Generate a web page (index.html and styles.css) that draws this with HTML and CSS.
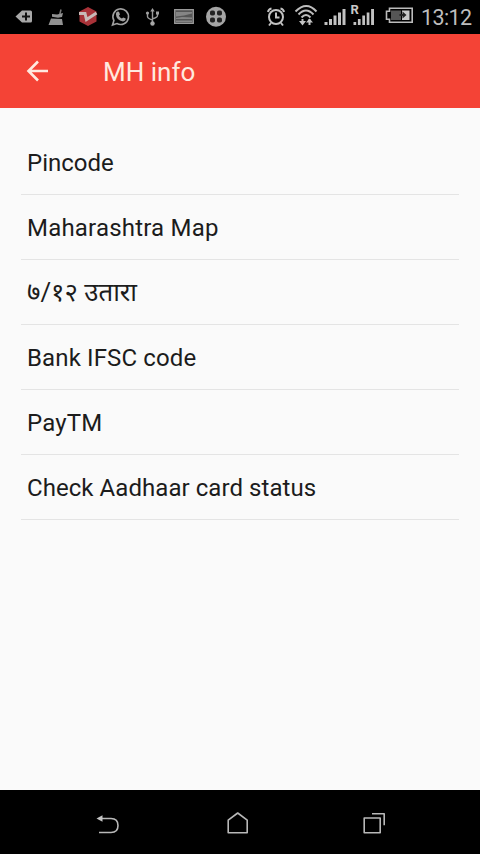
FILE: index.html
```html
<!DOCTYPE html>
<html lang="en">
<head>
<meta charset="utf-8">
<title>MH info</title>
<link rel="stylesheet" href="styles.css">
</head>
<body>
<div class="screen">
  <header class="status">
    <div class="notices">
      <svg width="32" height="34" viewBox="8 0 32 34"><path fill="#a8a8a8" d="M22 10.500h8.500q1.500 0 1.500 1.500v9q0 1.500-1.500 1.500H22l-6.500-6z"/><path stroke="#111" stroke-width="2" d="M26 12.500v8M22 16.500h8"/></svg>
      <svg width="32" height="34" viewBox="40 0 32 34"><path fill="none" stroke="#777" stroke-width="1.500" d="M59.500 15.500l1.500-6"/><path fill="#929292" d="M52 14l5 .5 6-1.500-1 4-4 .8-6-1zM51 18.500l11 .5 1 6H48.500z"/></svg>
      <svg width="32" height="34" viewBox="72 0 32 34"><path fill="#a83238" d="M88 7l8.500 4.500v10L88 26l-8.500-4.500v-10z"/><path fill="none" stroke="#c8bab8" stroke-width="3" d="M79 13.500h6l1.500 6 10-6.500"/></svg>
      <svg width="32" height="34" viewBox="104 0 32 34"><path fill="none" stroke="#a0a0a0" stroke-width="1.600" d="M112.500 25l1.400-4.500a7.800 7.800 0 1 1 3 3z"/><path fill="#a0a0a0" d="M117.500 11.500l1.500.3 1 2.700-1.100 1.200q1 2 3 2.900l1.300-1.200 2.500 1.200q.2 2.500-2.700 2.800-6.800-1.200-7.100-7.500 0-1.700 1.600-2.400z"/></svg>
      <svg width="32" height="34" viewBox="136 0 32 34"><path fill="none" stroke="#999" stroke-width="1.400" d="M152.500 10v13M147.500 13.500v3q0 2 5 3.500M157.500 13v2.500q0 2-5 3.200"/><path fill="#a0a0a0" d="M152.500 8l2.200 3.500h-4.400zM156 11.500h3v3h-3z"/><circle cx="147.500" cy="13" r="1.600" fill="#a0a0a0"/><circle cx="152.500" cy="23.500" r="2.200" fill="#a8a8a8"/></svg>
      <svg width="32" height="34" viewBox="168 0 32 34"><path fill="#555" stroke="#9a9a9a" stroke-width="1.300" d="M174.700 9.700h18.600v13.600h-18.600z"/><path fill="#858585" d="M176 12h16v1.500l-8 2-8 1zM176 18l6-1 10 .5v1.500h-16zM176 20.500h16v1.500h-16z"/></svg>
      <svg width="32" height="34" viewBox="200 0 32 34"><circle cx="216" cy="16.700" r="10" fill="#a5a5a5"/><g fill="#222"><rect x="210" y="10.500" width="5" height="5" rx="1.800"/><rect x="217" y="10.500" width="5" height="5" rx="1.800"/><rect x="210" y="17.500" width="5" height="5" rx="1.800"/><rect x="217" y="17.500" width="5" height="5" rx="1.800"/></g></svg>
    </div>
    <div class="system">
      <svg width="30" height="34" viewBox="261 0 30 34"><g fill="none" stroke="#c2c2c2" stroke-width="2"><circle cx="276" cy="17" r="7"/><path d="M268 12q.5-3 3.500-3.500M284 12q-.5-3-3.500-3.500M271 23l-2 2.500M281 23l2 2.500M276 12.500V17.500h3.500"/></g></svg>
      <svg width="30" height="34" viewBox="291 0 30 34"><g fill="none" stroke="#bdbdbd" stroke-width="2"><path d="M295.500 11.500q11-11 21 0M298.500 14.500q7.500-8 15 0M301.500 17.500q4.500-5 9 0"/><path d="M302.500 19v4M309.500 19v6"/></g><path fill="#c4c4c4" d="M299 21h7l-3.500 4.500zM306 22.500h7l-3.500-4z"/></svg>
      <svg width="27" height="34" viewBox="321 0 27 34"><path fill="#c2c2c2" d="M324.500 22h3v3h-3zM329 19h3v6h-3zM333.500 15.500h3V25h-3zM338 12.500h3V25h-3zM342.500 9h3v16h-3z"/></svg>
      <svg width="33" height="34" viewBox="348 0 33 34"><text class="roaming" x="350.500" y="13.500">R</text><path fill="#c2c2c2" d="M353.500 22h2.700v3h-2.700zM357.900 19h2.700v6h-2.700zM362.300 15.500h2.700V25h-2.700zM366.700 12.500h2.700V25h-2.700zM371.100 9h2.900v16h-2.900z"/></svg>
      <svg width="36" height="34" viewBox="381 0 36 34"><path fill="none" stroke="#bbb" stroke-width="1.600" d="M389.500 8.300h22.700v14h-22.700v-3h-3v-8h3z"/><path fill="#555" d="M391 10.500h10v9.500h-10z"/><path fill="#c8c8c8" d="M402 10.500h7.500v9.500H402z"/><path fill="#222" d="M399.500 14h3v-2.500l4 3.500-4 3.500v-2.500h-3z"/></svg>
      <span class="clock">13:12</span>
    </div>
  </header>
  <div class="appbar">
    <svg width="24" height="24" viewBox="0 0 24 24"><path fill="none" stroke="#ffe9df" stroke-width="2.600" d="M22 12H3M12 2.500L2.500 12l9.500 9.500"/></svg>
    <h1>MH info</h1>
  </div>
  <main>
    <ul class="links">
      <li>Pincode</li>
      <li class="map">Maharashtra Map</li>
      <li class="marathi" lang="mr">७/१२ उतारा</li>
      <li class="bank">Bank IFSC code</li>
      <li class="pay">PayTM</li>
      <li class="card">Check Aadhaar card status</li>
    </ul>
  </main>
  <nav class="keys">
    <svg width="26" height="26" viewBox="95 811 26 26"><path fill="none" stroke="#b8b8b8" stroke-width="1.600" d="M99 818.500h12q7 0 7 7t-7 7H99"/><path fill="#c4c4c4" d="M96.500 818.500l6-3.300v6.600z"/></svg>
    <svg width="26" height="26" viewBox="225 811 26 26"><path fill="none" stroke="#b8b8b8" stroke-width="1.600" stroke-linejoin="round" d="M228.200 832.700v-12.500l9.500-7.200 9.500 7.200v12.500z"/></svg>
    <svg width="26" height="26" viewBox="361 811 26 26"><path fill="none" stroke="#b8b8b8" stroke-width="1.600" stroke-linejoin="round" d="M364.200 818h16v14.700h-16zM372 813.700h12.200v11.500"/></svg>
  </nav>
</div>
</body>
</html>
```
FILE: styles.css
```css
* { box-sizing: border-box; }
body {
  margin: 0;
  background: #fafafa;
  font-family: Roboto, "Noto Sans", sans-serif;
}
.screen {
  display: flex;
  flex-direction: column;
  width: 480px;
  height: 854px;
}
svg { display: block; flex: none; }
.status {
  display: flex;
  justify-content: space-between;
  height: 34px;
  padding: 0 8px;
  background: #000;
}
.notices, .system { display: flex; }
.roaming { font: bold 13px Roboto, sans-serif; fill: #c8c8c8; }
.clock {
  width: 55px;
  padding-left: 4px;
  color: #bdbdbd;
  font-size: 21.5px;
  letter-spacing: -0.6px;
  line-height: 35px;
  white-space: nowrap;
}
.appbar {
  display: flex;
  align-items: center;
  height: 74px;
  padding-left: 26px;
  background: #f44336;
}
.appbar h1 {
  margin: 0 0 0 53px;
  color: #ffe9df;
  font-size: 26px;
  font-weight: 400;
  line-height: 74px;
  padding-top: 1px;
}
main {
  flex: 1;
  padding: 22px 21px 0;
}
.links {
  margin: 0;
  padding: 0;
  list-style: none;
}
.links li {
  height: 65px;
  padding-left: 6px;
  border-bottom: 1px solid #e4e4e4;
  color: #1c1c1c;
  font-size: 24px;
  line-height: 66px;
  white-space: nowrap;
}
.links .map { letter-spacing: 0.2px; }
.links .marathi { font-size: 25.8px; line-height: 65px; }
.links .bank { letter-spacing: 0.13px; }
.links .pay { letter-spacing: 0.2px; }
.links .card { letter-spacing: 0.06px; }
.keys {
  display: flex;
  gap: 104px;
  height: 64px;
  padding: 21px 0 0 95px;
  background: #000;
}
.keys svg:last-child { margin-left: 6px; }
```
